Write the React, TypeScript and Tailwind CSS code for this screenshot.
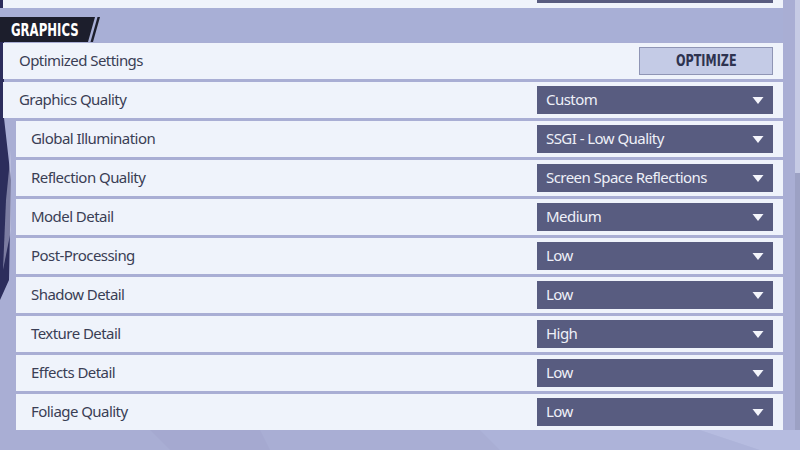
import React from 'react'

type Item = { label: string; value: string }

const subItems: Item[] = [
  { label: 'Global Illumination', value: 'SSGI - Low Quality' },
  { label: 'Reflection Quality', value: 'Screen Space Reflections' },
  { label: 'Model Detail', value: 'Medium' },
  { label: 'Post-Processing', value: 'Low' },
  { label: 'Shadow Detail', value: 'Low' },
  { label: 'Texture Detail', value: 'High' },
  { label: 'Effects Detail', value: 'Low' },
  { label: 'Foliage Quality', value: 'Low' },
]

function Dropdown({ value }: { value: string }) {
  return (
    <div className="w-[236px] h-[28px] bg-[#585c80] flex items-center justify-between pl-[9px] pr-[9px]">
      <span className="text-[15px] tracking-[-0.55px] text-[#eef0f8] leading-none -mt-[2px]">{value}</span>
      <svg width="12" height="7" viewBox="0 0 12 7">
        <path d="M0.5 0 H11.5 L6 7 Z" fill="#f4f5fb" />
      </svg>
    </div>
  )
}

function Row({ label, children, sub }: { label: string; children: React.ReactNode; sub?: boolean }) {
  return (
    <div className={`h-[36px] bg-[#eff3fb] flex items-center justify-between pr-[10px] ${sub ? 'ml-[13px] pl-[15px]' : 'pl-[16px]'}`}>
      <span className="text-[15px] tracking-[-0.55px] text-[#3a3e55] leading-none -mt-[2px]">{label}</span>
      {children}
    </div>
  )
}

export default function App() {
  return (
    <div className="w-[800px] h-[450px] bg-[#a9aed4] relative overflow-hidden" style={{ fontFamily: '"Noto Sans", "Open Sans", sans-serif' }}>
      {/* background art */}
      <svg className="absolute inset-0" width="800" height="450" viewBox="0 0 800 450">
        <polygon points="0,0 4,0 4,118 11,180 9,280 0,300" fill="#2c2d5c" />
        <polygon points="6,200 11,150 11,230 3,270" fill="#c9cbe6" opacity="0.5" />
        <polygon points="150,430 260,430 270,450 170,450" fill="#a5a9d0" />
        <polygon points="480,430 800,430 800,450 500,450" fill="#adb3d9" />
        <polygon points="700,430 800,430 800,450 760,450" fill="#b6bce0" />
      </svg>

      <div className="relative flex h-full">
        <div className="w-[783px] flex flex-col pl-[3px]">
          {/* tail of the previous section */}
          <div className="h-[8px] bg-[#eff3fb] flex justify-end pr-[10px]">
            <div className="w-[236px] h-[3px] bg-[#585c80]" />
          </div>

          {/* section header */}
          <div className="h-[34px] bg-[#a8afd6] flex items-end -ml-[3px]">
            <div className="relative h-[25px] w-[100px]">
              <svg className="absolute inset-0" width="100" height="25" viewBox="0 0 100 25">
                <polygon points="0,0 95,0 88,25 0,25" fill="#1c1e2c" />
                <polygon points="97.5,0 100,0 93,25 90.5,25" fill="#1c1e2c" />
              </svg>
              <span
                className="relative inline-block ml-[11px] pt-[4px] text-[18px] font-bold text-white leading-[18px] scale-x-[0.65] origin-left"
                style={{ fontFamily: '"DejaVu Sans", sans-serif' }}
              >
                GRAPHICS
              </span>
            </div>
          </div>

          <div className="flex flex-col gap-[3px] pt-[1px]">
            <Row label="Optimized Settings">
              <div className="w-[134px] h-[28px] bg-[#c4cbe6] border border-[#8f95b5] flex items-center justify-center">
                <span
                  className="inline-block text-[16px] font-bold text-[#2e3350] scale-x-[0.7]"
                  style={{ fontFamily: '"DejaVu Sans", sans-serif' }}
                >
                  OPTIMIZE
                </span>
              </div>
            </Row>
            <Row label="Graphics Quality">
              <Dropdown value="Custom" />
            </Row>
            {subItems.map((it) => (
              <Row key={it.label} label={it.label} sub>
                <Dropdown value={it.value} />
              </Row>
            ))}
          </div>
        </div>

        {/* scrollbar */}
        <div className="ml-[12px] w-[5px] h-[430px] flex flex-col">
          <div className="h-[173px] bg-[#c6cbe5]" />
          <div className="flex-1 bg-[#9ca1c4]" />
        </div>
      </div>
    </div>
  )
}
